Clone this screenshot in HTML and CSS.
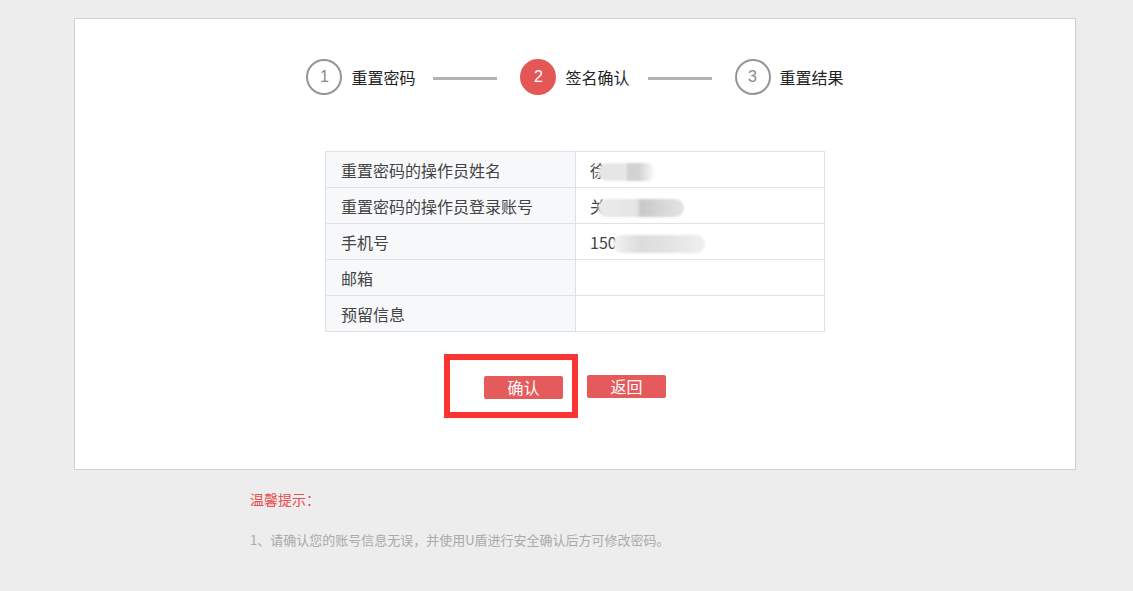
FILE: index.html
```html
<!DOCTYPE html>
<html lang="zh-CN">
<head>
    <meta charset="UTF-8">
    <meta name="viewport" content="width=device-width, initial-scale=1.0">
    <title>重置密码</title>
    <link rel="stylesheet" href="styles.css">
</head>
<body>
    <div class="page">
        <div class="card">
            <!-- steps -->
            <div class="steps">
                <div class="step">
                    <span class="step-num">1</span>
                    <span class="step-text">重置密码</span>
                </div>
                <span class="step-line"></span>
                <div class="step active">
                    <span class="step-num">2</span>
                    <span class="step-text">签名确认</span>
                </div>
                <span class="step-line"></span>
                <div class="step">
                    <span class="step-num">3</span>
                    <span class="step-text">重置结果</span>
                </div>
            </div>

            <table class="info">
                <tr>
                    <td class="label">重置密码的操作员姓名</td>
                    <td class="value">徐<span class="mask m1"></span></td>
                </tr>
                <tr>
                    <td class="label">重置密码的操作员登录账号</td>
                    <td class="value">关<span class="mask m2"></span></td>
                </tr>
                <tr>
                    <td class="label">手机号</td>
                    <td class="value">150<span class="mask m3"></span></td>
                </tr>
                <tr>
                    <td class="label">邮箱</td>
                    <td class="value"></td>
                </tr>
                <tr>
                    <td class="label">预留信息</td>
                    <td class="value"></td>
                </tr>
            </table>

            <div class="actions">
                <div class="mark-wrap">
                    <button class="btn">确认</button>
                    <span class="mark"></span>
                </div>
                <button class="btn">返回</button>
            </div>
        </div>

        <div class="tips">
            <p class="tips-title">温馨提示：</p>
            <p class="tips-text">1、请确认您的账号信息无误，并使用U盾进行安全确认后方可修改密码。</p>
        </div>
    </div>
</body>
</html>
```

FILE: styles.css
```css
body {
    margin: 0;
    background-color: #ededed;
    font-family: "Noto Sans CJK SC", "Microsoft YaHei", sans-serif;
    color: #333;
}
.page {
    padding-top: 18px;
}
.card {
    width: 1000px;
    height: 410px;
    margin-left: 74px;
    background-color: #fff;
    border: 1px solid #cfcfcf;
    padding-top: 40px;
}
.steps {
    display: flex;
    justify-content: center;
    align-items: center;
    height: 36px;
}
.step {
    display: flex;
    align-items: center;
}
.step-num {
    width: 32px;
    height: 32px;
    border: 2px solid #959595;
    border-radius: 50%;
    display: flex;
    align-items: center;
    justify-content: center;
    font-size: 16px;
    color: #888;
    font-family: "Liberation Sans", Arial, sans-serif;
}
.step.active .step-num {
    background-color: #e55757;
    border-color: #e55757;
    color: #fff;
}
.step-text {
    margin-left: 9px;
    font-size: 16px;
    color: #222;
    line-height: 20px;
}
.step-line {
    width: 64px;
    height: 3px;
    background-color: #b2b2b2;
    margin: 2px 23px 0 18px;
}
.info {
    width: 500px;
    margin: 56px auto 0;
    border-collapse: collapse;
    font-size: 16px;
    color: #444;
}
.info td {
    height: 35px;
    border: 1px solid #dfe1e6;
    padding: 0 15px;
    white-space: nowrap;
}
.info .label {
    width: 219px;
    background-color: #f7f8fa;
}
.info .value {
    padding-left: 14px;
}
.mask {
    display: inline-block;
    height: 18px;
    vertical-align: middle;
    border-radius: 9px;
    filter: blur(1px);
    margin-left: -8px;
}
.m1 {
    width: 58px;
    background: linear-gradient(90deg, #e6e6e6 0, #e6e6e6 50%, #d2d2d2 50%, #d2d2d2 70%, #fff 100%);
}
.m2 {
    width: 86px;
    background: linear-gradient(90deg, #ebebeb 0, #e4e4e4 45%, #c8c8c8 50%, #d4d4d4 70%, #e4e4e4 100%);
}
.m3 {
    width: 92px;
    margin-left: -4px;
    background: linear-gradient(90deg, #f2f2f2 0, #dcdcdc 30%, #e3e3e3 60%, #efefef 100%);
}
.actions {
    display: flex;
    justify-content: center;
    gap: 24px;
    margin-top: 43px;
}
.mark-wrap {
    position: relative;
}
.btn {
    width: 79px;
    height: 23px;
    border: none;
    border-radius: 2px;
    background-color: #e55a5a;
    color: #fff;
    font-size: 16px;
    font-family: "Noto Sans CJK SC", "Microsoft YaHei", sans-serif;
    line-height: 23px;
    padding: 0;
}
.mark {
    position: absolute;
    left: -40px;
    top: -21px;
    width: 122px;
    height: 52px;
    border: 6px solid #fb3434;
}
.tips {
    margin-left: 250px;
    padding-top: 15px;
}
.tips-title {
    margin: 0;
    font-size: 14px;
    color: #e84d4d;
    line-height: 28px;
}
.tips-text {
    margin: 18px 0 0;
    font-size: 13px;
    color: #aaa;
    line-height: 18px;
}
```
